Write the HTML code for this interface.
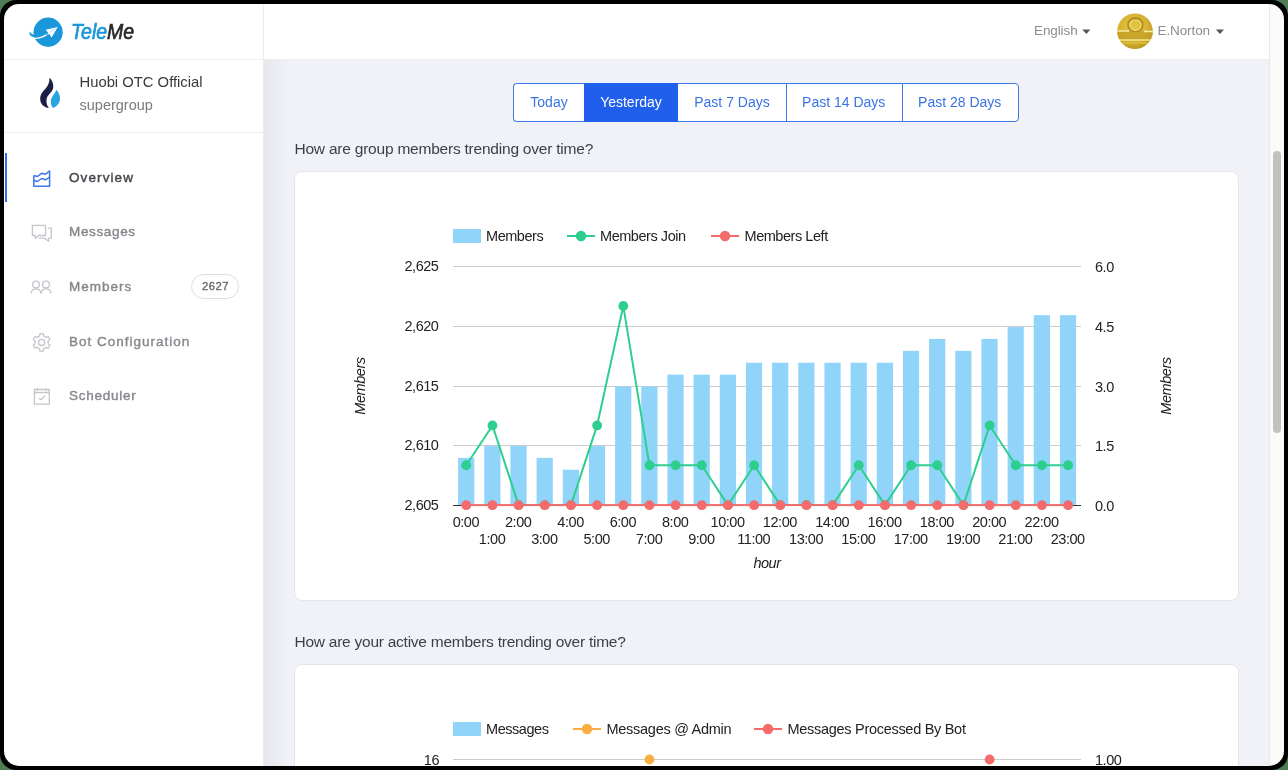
<!DOCTYPE html>
<html><head><meta charset="utf-8">
<style>
*{margin:0;padding:0;box-sizing:border-box}
html,body{width:1288px;height:770px;overflow:hidden;background:#4d7c55;font-family:"Liberation Sans",sans-serif}
#frame{position:absolute;left:0;top:0;width:1288px;height:770px;background:#000;border-radius:16px}
#app{position:absolute;left:0;top:0;width:1288px;height:770px;background:#f0f2f7;clip-path:inset(4px round 15px);will-change:transform}
.abs{position:absolute}
#sidebar{position:absolute;left:4px;top:4px;width:260px;height:762px;background:#fff;border-right:1px solid #ececec}
#header{position:absolute;left:264px;top:4px;width:1005px;height:56px;background:#fff}
.hline{position:absolute;height:1px;background:#eeeff1}
#shadowL{position:absolute;left:264px;top:60px;width:26px;height:710px;background:linear-gradient(to right,rgba(0,0,30,0.045),rgba(0,0,30,0))}
#scroll{position:absolute;left:1269px;top:4px;width:15px;height:762px;background:#fafafa;border-left:1px solid #e8e8e8}
#thumb{position:absolute;left:1273px;top:151px;width:8px;height:282px;background:#c1c1c1;border-radius:4px}
.t{position:absolute;white-space:nowrap;line-height:1}
.nav{position:absolute;left:69px;font-size:13.5px;font-weight:normal;color:#86888d;-webkit-text-stroke:0.4px #86888d;letter-spacing:0.85px;white-space:nowrap;line-height:1}
.btn{position:absolute;top:83px;height:39px;border:1px solid #3b78ec;background:#fff;color:#3a73e6;font-size:14px;line-height:37px;text-align:center;white-space:nowrap}
.card{position:absolute;left:294px;width:945px;background:#fff;border:1px solid #e3e5ea;border-radius:8px}
svg text{font-family:"Liberation Sans",sans-serif;font-size:14.5px;letter-spacing:-0.45px;fill:#222}
</style></head><body>
<div id="frame"></div>
<div id="app">
  <div id="sidebar"></div>
  <div id="header"></div>
  <div id="shadowL"></div>
  <div class="hline" style="left:4px;top:59px;width:1265px"></div>
  <div class="hline" style="left:4px;top:132px;width:259px"></div>

  <!-- logo -->
  <svg class="abs" style="left:26px;top:14px" width="40" height="36" viewBox="0 0 40 36">
    <circle cx="22.1" cy="18.2" r="14.6" fill="#1a96da"/>
    <path d="M3.7 17.3 C3.1 19.6 3.7 21.6 5.8 22.5 C8.3 23.5 11.8 23.4 14.5 22.6 C16.5 22 18.3 21.1 20 20 L12 18 L7.7 20.4 C6 20.4 4.5 19.4 3.7 17.3 Z" fill="#1a96da"/>
    <path d="M8.3 24.6 C11.5 24.4 14.5 23.8 17 22.7 C18.3 22.1 19.3 21.5 20.6 20.7" fill="none" stroke="#fff" stroke-width="1.4"/>
    <path d="M19.6 15.8 L31.8 13.1 L25.6 23.4 L23.2 20 L21.2 20.8 L22 18.4 Z" fill="#fff"/>
    <path d="M31.5 13.4 L22.3 18.8" stroke="#a8d8f4" stroke-width="0.8"/>
  </svg>
  <div class="t" style="left:71px;top:21.2px;font-size:22px;font-style:italic;color:#1a96da;-webkit-text-stroke:0.7px #1a96da;transform:scaleX(0.885);transform-origin:0 0;letter-spacing:0px">Tele<span style="color:#2a2a2a;-webkit-text-stroke:0.7px #2a2a2a">Me</span></div>

  <!-- group -->
  <svg class="abs" style="left:34px;top:74px" width="32" height="38" viewBox="0 0 32 38">
    <path d="M15.5 3.7 C17.8 6 19.5 9 19.3 13 C19 17 15.5 19.5 13.5 22.5 C11.8 25.5 12.2 30.5 14.8 34 C10 33.5 6.3 30 6.2 25 C6.1 20 9.5 17 12 14 C14 11.5 15.8 8 15.5 3.7 Z" fill="#1b1f48"/>
    <path d="M22.3 15.8 C24.8 18.5 26.2 21.5 26 25 C25.8 29 23 32.5 19 34 C17.5 32 16.5 29.5 16.8 27 C17.2 22.5 21 20 22.3 15.8 Z" fill="#2aa3e1"/>
  </svg>
  <div class="t" style="left:79.5px;top:75px;font-size:14.8px;color:#3a3a3a">Huobi OTC Official</div>
  <div class="t" style="left:79.5px;top:98px;font-size:14.5px;color:#7b7b7b">supergroup</div>

  <!-- nav -->
  <div class="abs" style="left:5px;top:153px;width:2px;height:49px;background:#2f6ff0"></div>
  <svg class="abs" style="left:0;top:0" width="264" height="420" viewBox="0 0 264 420" fill="none" stroke-linejoin="round">
    <g stroke="#3d74f0" stroke-width="1.5">
      <path d="M33.8 175.5 V186.2 H49.6 V170.7"/>
      <path d="M33.8 175.5 L37.4 176.5 L41.6 173.3 L45.6 174.3 L49.6 170.7"/>
      <path d="M33.8 180.5 L37.4 181.5 L41.6 178.5 L45.6 179.8 L49.6 177"/>
    </g>
    <g stroke="#c4c6cb" stroke-width="1.3">
      <path d="M32.4 225.3 H45.5 V235.5 H38.5 L35.3 238.4 V235.5 H32.4 Z"/>
      <path d="M47.8 228.2 H51.3 V238.2 H48.7 V241.3 L44.7 238.2 H38.7"/>
      <circle cx="36" cy="284.6" r="3.4"/>
      <circle cx="46" cy="284.6" r="3.4"/>
      <path d="M30.9 293.4 C31.2 290.5 33.2 288.8 36 288.8 C38.8 288.8 40.7 290.5 41 293.4 C41.3 290.5 43.2 288.8 46 288.8 C48.8 288.8 50.8 290.5 51.1 293.4"/>
      <path d="M38.30 336.68 L39.45 336.16 L39.92 333.76 L43.28 333.76 L43.75 336.16 L44.90 336.68 L45.93 337.42 L48.24 336.63 L49.92 339.54 L48.08 341.14 L48.20 342.40 L48.08 343.66 L49.92 345.26 L48.24 348.17 L45.93 347.38 L44.90 348.12 L43.75 348.64 L43.28 351.04 L39.92 351.04 L39.45 348.64 L38.30 348.12 L37.27 347.38 L34.96 348.17 L33.28 345.26 L35.12 343.66 L35.00 342.40 L35.12 341.14 L33.28 339.54 L34.96 336.63 L37.27 337.42 Z"/>
      <circle cx="41.6" cy="342.4" r="3.1"/>
      <rect x="34.4" y="389.5" width="14.9" height="14.7"/>
      <path d="M34.4 392.5 H49.3 M37.3 388.2 V390.7 M46 388.2 V390.7"/>
      <path d="M39.1 398.2 L40.9 399.8 L45.3 395.8"/>
    </g>
  </svg>
  <div class="nav" style="top:170.8px;letter-spacing:1.1px;color:#46484d;-webkit-text-stroke:0.45px #46484d">Overview</div>
  <div class="nav" style="top:225px;letter-spacing:0.65px">Messages</div>
  <div class="nav" style="top:279.6px;letter-spacing:1.0px">Members</div>
  <div class="abs" style="left:191px;top:274px;width:48px;height:25px;border:1px solid #dcdde0;border-radius:13px;font-size:11.3px;font-weight:normal;-webkit-text-stroke:0.35px #66686d;letter-spacing:0.5px;color:#66686d;text-align:center;line-height:23px;padding-left:1px">2627</div>
  <div class="nav" style="top:335px;letter-spacing:1.0px">Bot Configuration</div>
  <div class="nav" style="top:388.8px;letter-spacing:0.75px">Scheduler</div>

  <!-- header right -->
  <div class="t" style="left:1034px;top:23.6px;font-size:13.5px;color:#8b8d91;letter-spacing:-0.1px">English</div>
  <svg class="abs" style="left:1080px;top:27px" width="14" height="10" viewBox="1080 27 14 10"><path d="M1082.3 29.4 H1090.4 L1086.35 34 Z" fill="#56575b"/></svg>
  <svg class="abs" style="left:1117px;top:13px" width="36" height="36" viewBox="0 0 36 36">
    <defs>
      <radialGradient id="gold" cx="45%" cy="40%" r="65%"><stop offset="0" stop-color="#e6c842"/><stop offset="0.6" stop-color="#d6b333"/><stop offset="1" stop-color="#b8931f"/></radialGradient>
      <clipPath id="av"><circle cx="18" cy="18.2" r="17.8"/></clipPath>
    </defs>
    <g clip-path="url(#av)">
      <rect width="36" height="36" fill="url(#gold)"/>
      <rect x="0" y="18" width="36" height="9" fill="#c29d26" opacity="0.7"/>
      <ellipse cx="18.4" cy="11.7" rx="7.2" ry="6.6" fill="none" stroke="#b58f1e" stroke-width="2.2"/>
      <ellipse cx="18.4" cy="12.2" rx="5.6" ry="5.2" fill="none" stroke="#f5e28a" stroke-width="1.1"/>
      <path d="M0 18 H12 M27 18.5 H36" stroke="#f7eaa2" stroke-width="1.3"/>
      <path d="M2 27 H34" stroke="#f8e690" stroke-width="1.6"/>
      <path d="M0 30 H36" stroke="#d9b83a" stroke-width="2"/>
    </g>
  </svg>
  <div class="t" style="left:1157.5px;top:23.6px;font-size:13.5px;color:#8b8d91;letter-spacing:-0.1px">E.Norton</div>
  <svg class="abs" style="left:1213px;top:27px" width="14" height="10" viewBox="1213 27 14 10"><path d="M1215.9 29.4 H1224 L1219.95 34 Z" fill="#56575b"/></svg>

  <!-- buttons -->
  <div class="btn" style="left:513px;width:71px;border-radius:4px 0 0 4px;border-right:none">Today</div>
  <div class="btn" style="left:584px;width:94px;background:#1f5fec;border-color:#1f5fec;color:#fff">Yesterday</div>
  <div class="btn" style="left:678px;width:109px;border-left:none">Past 7 Days</div>
  <div class="btn" style="left:786px;width:117px;text-indent:-1.5px">Past 14 Days</div>
  <div class="btn" style="left:902px;width:117px;border-radius:0 4px 4px 0;text-indent:-1.5px">Past 28 Days</div>

  <div class="t" style="left:294.5px;top:141px;font-size:15.5px;letter-spacing:-0.22px;color:#3d3f44">How are group members trending over time?</div>
  <div class="card" style="top:171px;height:430px"></div>
  <div class="t" style="left:294.5px;top:634px;font-size:15.5px;letter-spacing:-0.25px;color:#3d3f44">How are your active members trending over time?</div>
  <div class="card" style="top:664px;height:200px"></div>

  <svg class="abs" style="left:0;top:0" width="1288" height="770">
<rect x="453" y="266" width="628" height="1" fill="#cccccc"/>
<rect x="453" y="326" width="628" height="1" fill="#cccccc"/>
<rect x="453" y="386" width="628" height="1" fill="#cccccc"/>
<rect x="453" y="445" width="628" height="1" fill="#cccccc"/>
<rect x="458.10" y="457.84" width="16.2" height="47.16" fill="#90d4fa"/>
<rect x="484.27" y="445.95" width="16.2" height="59.05" fill="#90d4fa"/>
<rect x="510.43" y="445.95" width="16.2" height="59.05" fill="#90d4fa"/>
<rect x="536.60" y="457.84" width="16.2" height="47.16" fill="#90d4fa"/>
<rect x="562.77" y="469.73" width="16.2" height="35.27" fill="#90d4fa"/>
<rect x="588.93" y="445.95" width="16.2" height="59.05" fill="#90d4fa"/>
<rect x="615.10" y="386.50" width="16.2" height="118.50" fill="#90d4fa"/>
<rect x="641.27" y="386.50" width="16.2" height="118.50" fill="#90d4fa"/>
<rect x="667.43" y="374.61" width="16.2" height="130.39" fill="#90d4fa"/>
<rect x="693.60" y="374.61" width="16.2" height="130.39" fill="#90d4fa"/>
<rect x="719.77" y="374.61" width="16.2" height="130.39" fill="#90d4fa"/>
<rect x="745.93" y="362.72" width="16.2" height="142.28" fill="#90d4fa"/>
<rect x="772.10" y="362.72" width="16.2" height="142.28" fill="#90d4fa"/>
<rect x="798.27" y="362.72" width="16.2" height="142.28" fill="#90d4fa"/>
<rect x="824.43" y="362.72" width="16.2" height="142.28" fill="#90d4fa"/>
<rect x="850.60" y="362.72" width="16.2" height="142.28" fill="#90d4fa"/>
<rect x="876.77" y="362.72" width="16.2" height="142.28" fill="#90d4fa"/>
<rect x="902.93" y="350.83" width="16.2" height="154.17" fill="#90d4fa"/>
<rect x="929.10" y="338.94" width="16.2" height="166.06" fill="#90d4fa"/>
<rect x="955.27" y="350.83" width="16.2" height="154.17" fill="#90d4fa"/>
<rect x="981.43" y="338.94" width="16.2" height="166.06" fill="#90d4fa"/>
<rect x="1007.60" y="327.05" width="16.2" height="177.95" fill="#90d4fa"/>
<rect x="1033.77" y="315.16" width="16.2" height="189.84" fill="#90d4fa"/>
<rect x="1059.93" y="315.16" width="16.2" height="189.84" fill="#90d4fa"/>
<rect x="453" y="505" width="628" height="1" fill="#333"/>
<polyline points="466.28,465.27 492.45,425.43 518.62,505.10 544.78,505.10 570.95,505.10 597.12,425.43 623.28,305.93 649.45,465.27 675.62,465.27 701.78,465.27 727.95,505.10 754.12,465.27 780.28,505.10 806.45,505.10 832.62,505.10 858.78,465.27 884.95,505.10 911.12,465.27 937.28,465.27 963.45,505.10 989.62,425.43 1015.78,465.27 1041.95,465.27 1068.12,465.27" fill="none" stroke="#2ecf8e" stroke-width="2" stroke-linejoin="round"/>
<circle cx="466.28" cy="465.27" r="4.9" fill="#2ecf8e"/>
<circle cx="492.45" cy="425.43" r="4.9" fill="#2ecf8e"/>
<circle cx="518.62" cy="505.10" r="4.9" fill="#2ecf8e"/>
<circle cx="544.78" cy="505.10" r="4.9" fill="#2ecf8e"/>
<circle cx="570.95" cy="505.10" r="4.9" fill="#2ecf8e"/>
<circle cx="597.12" cy="425.43" r="4.9" fill="#2ecf8e"/>
<circle cx="623.28" cy="305.93" r="4.9" fill="#2ecf8e"/>
<circle cx="649.45" cy="465.27" r="4.9" fill="#2ecf8e"/>
<circle cx="675.62" cy="465.27" r="4.9" fill="#2ecf8e"/>
<circle cx="701.78" cy="465.27" r="4.9" fill="#2ecf8e"/>
<circle cx="727.95" cy="505.10" r="4.9" fill="#2ecf8e"/>
<circle cx="754.12" cy="465.27" r="4.9" fill="#2ecf8e"/>
<circle cx="780.28" cy="505.10" r="4.9" fill="#2ecf8e"/>
<circle cx="806.45" cy="505.10" r="4.9" fill="#2ecf8e"/>
<circle cx="832.62" cy="505.10" r="4.9" fill="#2ecf8e"/>
<circle cx="858.78" cy="465.27" r="4.9" fill="#2ecf8e"/>
<circle cx="884.95" cy="505.10" r="4.9" fill="#2ecf8e"/>
<circle cx="911.12" cy="465.27" r="4.9" fill="#2ecf8e"/>
<circle cx="937.28" cy="465.27" r="4.9" fill="#2ecf8e"/>
<circle cx="963.45" cy="505.10" r="4.9" fill="#2ecf8e"/>
<circle cx="989.62" cy="425.43" r="4.9" fill="#2ecf8e"/>
<circle cx="1015.78" cy="465.27" r="4.9" fill="#2ecf8e"/>
<circle cx="1041.95" cy="465.27" r="4.9" fill="#2ecf8e"/>
<circle cx="1068.12" cy="465.27" r="4.9" fill="#2ecf8e"/>
<rect x="466.28" y="504.1" width="601.83" height="2" fill="#f36b6b"/>
<circle cx="466.28" cy="505.2" r="4.9" fill="#f36b6b"/>
<circle cx="492.45" cy="505.2" r="4.9" fill="#f36b6b"/>
<circle cx="518.62" cy="505.2" r="4.9" fill="#f36b6b"/>
<circle cx="544.78" cy="505.2" r="4.9" fill="#f36b6b"/>
<circle cx="570.95" cy="505.2" r="4.9" fill="#f36b6b"/>
<circle cx="597.12" cy="505.2" r="4.9" fill="#f36b6b"/>
<circle cx="623.28" cy="505.2" r="4.9" fill="#f36b6b"/>
<circle cx="649.45" cy="505.2" r="4.9" fill="#f36b6b"/>
<circle cx="675.62" cy="505.2" r="4.9" fill="#f36b6b"/>
<circle cx="701.78" cy="505.2" r="4.9" fill="#f36b6b"/>
<circle cx="727.95" cy="505.2" r="4.9" fill="#f36b6b"/>
<circle cx="754.12" cy="505.2" r="4.9" fill="#f36b6b"/>
<circle cx="780.28" cy="505.2" r="4.9" fill="#f36b6b"/>
<circle cx="806.45" cy="505.2" r="4.9" fill="#f36b6b"/>
<circle cx="832.62" cy="505.2" r="4.9" fill="#f36b6b"/>
<circle cx="858.78" cy="505.2" r="4.9" fill="#f36b6b"/>
<circle cx="884.95" cy="505.2" r="4.9" fill="#f36b6b"/>
<circle cx="911.12" cy="505.2" r="4.9" fill="#f36b6b"/>
<circle cx="937.28" cy="505.2" r="4.9" fill="#f36b6b"/>
<circle cx="963.45" cy="505.2" r="4.9" fill="#f36b6b"/>
<circle cx="989.62" cy="505.2" r="4.9" fill="#f36b6b"/>
<circle cx="1015.78" cy="505.2" r="4.9" fill="#f36b6b"/>
<circle cx="1041.95" cy="505.2" r="4.9" fill="#f36b6b"/>
<circle cx="1068.12" cy="505.2" r="4.9" fill="#f36b6b"/>
<text x="438.5" y="270.8" text-anchor="end">2,625</text>
<text x="438.5" y="330.8" text-anchor="end">2,620</text>
<text x="438.5" y="390.8" text-anchor="end">2,615</text>
<text x="438.5" y="449.8" text-anchor="end">2,610</text>
<text x="438.5" y="509.8" text-anchor="end">2,605</text>
<text x="1095" y="271.5">6.0</text>
<text x="1095" y="331.5">4.5</text>
<text x="1095" y="391.5">3.0</text>
<text x="1095" y="450.5">1.5</text>
<text x="1095" y="510.5">0.0</text>
<text x="465.88" y="527" text-anchor="middle">0:00</text>
<text x="492.05" y="544" text-anchor="middle">1:00</text>
<text x="518.22" y="527" text-anchor="middle">2:00</text>
<text x="544.38" y="544" text-anchor="middle">3:00</text>
<text x="570.55" y="527" text-anchor="middle">4:00</text>
<text x="596.72" y="544" text-anchor="middle">5:00</text>
<text x="622.88" y="527" text-anchor="middle">6:00</text>
<text x="649.05" y="544" text-anchor="middle">7:00</text>
<text x="675.22" y="527" text-anchor="middle">8:00</text>
<text x="701.38" y="544" text-anchor="middle">9:00</text>
<text x="727.55" y="527" text-anchor="middle">10:00</text>
<text x="753.72" y="544" text-anchor="middle">11:00</text>
<text x="779.88" y="527" text-anchor="middle">12:00</text>
<text x="806.05" y="544" text-anchor="middle">13:00</text>
<text x="832.22" y="527" text-anchor="middle">14:00</text>
<text x="858.38" y="544" text-anchor="middle">15:00</text>
<text x="884.55" y="527" text-anchor="middle">16:00</text>
<text x="910.72" y="544" text-anchor="middle">17:00</text>
<text x="936.88" y="527" text-anchor="middle">18:00</text>
<text x="963.05" y="544" text-anchor="middle">19:00</text>
<text x="989.22" y="527" text-anchor="middle">20:00</text>
<text x="1015.38" y="544" text-anchor="middle">21:00</text>
<text x="1041.55" y="527" text-anchor="middle">22:00</text>
<text x="1067.72" y="544" text-anchor="middle">23:00</text>
<text x="767" y="568" text-anchor="middle" font-style="italic">hour</text>
<text transform="translate(365,386) rotate(-90)" text-anchor="middle" font-style="italic">Members</text>
<text transform="translate(1171,386) rotate(-90)" text-anchor="middle" font-style="italic">Members</text>
<rect x="453" y="229" width="28" height="14" fill="#90d4fa"/>
<text x="486" y="241.3">Members</text>
<rect x="567" y="235" width="28" height="2" fill="#2ecf8e"/><circle cx="581" cy="236" r="5.2" fill="#2ecf8e"/>
<text x="600" y="241.3">Members Join</text>
<rect x="711" y="235" width="28" height="2" fill="#f36b6b"/><circle cx="725" cy="236" r="5.2" fill="#f36b6b"/>
<text x="744.5" y="241.3">Members Left</text>
<rect x="453" y="722" width="28" height="14" fill="#90d4fa"/>
<text x="486" y="734">Messages</text>
<rect x="573" y="728" width="28" height="2" fill="#faad40"/><circle cx="587" cy="729" r="5.2" fill="#faad40"/>
<text x="606.5" y="734" style="letter-spacing:-0.27px">Messages @ Admin</text>
<rect x="754" y="728" width="28" height="2" fill="#f36b6b"/><circle cx="768" cy="729" r="5.2" fill="#f36b6b"/>
<text x="787.5" y="734" style="letter-spacing:-0.29px">Messages Processed By Bot</text>
<rect x="453" y="759" width="628" height="1" fill="#cccccc"/>
<text x="439" y="764.5" text-anchor="end">16</text>
<text x="1095" y="764.5">1.00</text>
<circle cx="649.45" cy="759.5" r="4.9" fill="#faad40"/>
<circle cx="989.62" cy="759.5" r="4.9" fill="#f36b6b"/>
  </svg>

  <div id="scroll"></div>
  <div id="thumb"></div>
</div>
</body></html>
